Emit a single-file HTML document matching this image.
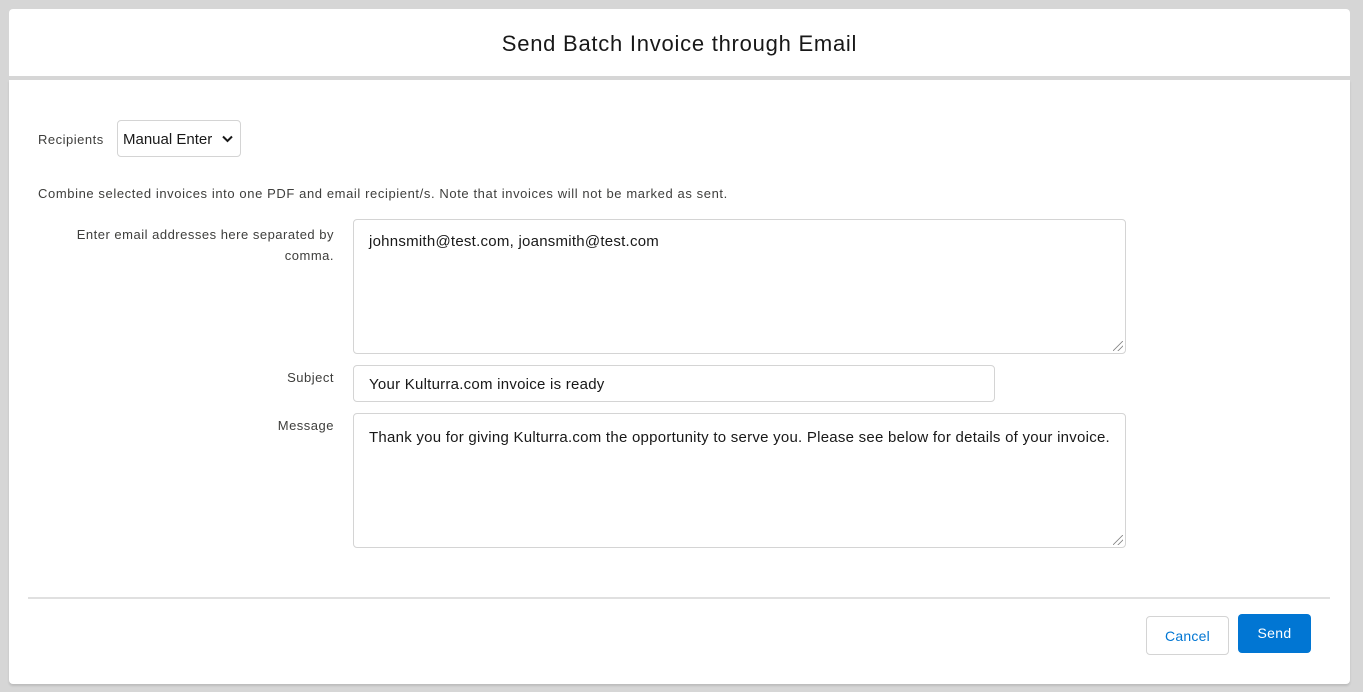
<!DOCTYPE html>
<html><head><style>
body{margin:0;width:1363px;height:692px;background:#d6d6d6;font-family:"Liberation Sans",sans-serif;position:relative;overflow:hidden}
.a{position:absolute}
.card{background:#fff;border-radius:4px}
.lbl{color:#3e3e3c;font-size:13px;letter-spacing:0.5px}
.box{border:1px solid #d4d4d4;border-radius:4px;background:#fff;box-sizing:border-box;font-size:15px;color:#181818;letter-spacing:0.25px}
.grip{position:absolute;right:2px;bottom:2px;width:10px;height:10px;background:linear-gradient(135deg,transparent 45%,#888 46%,#888 52%,transparent 53%,transparent 70%,#888 71%,#888 77%,transparent 78%)}
</style></head><body>
<div class="a card" style="left:9px;top:9px;width:1341px;height:67px;border-radius:4px 4px 0 0"></div>
<div class="a" style="left:9px;top:31px;width:1341px;text-align:center;font-size:22px;color:#181818;letter-spacing:0.75px">Send Batch Invoice through Email</div>
<div class="a card" style="left:9px;top:80px;width:1341px;height:604px;border-radius:0 0 4px 4px;box-shadow:0 2px 2px rgba(0,0,0,.12)"></div>
<div class="a lbl" style="left:38px;top:132px">Recipients</div>
<div class="a box" style="left:117px;top:120px;width:124px;height:37px;padding:10px 0 0 5px;letter-spacing:0">Manual Enter
<svg class="a" style="left:104px;top:14px" width="11" height="8" viewBox="0 0 11 8"><path d="M1 1.5l4.5 4.5 4.5-4.5" fill="none" stroke="#181818" stroke-width="2"/></svg></div>
<div class="a lbl" style="left:38px;top:186px;letter-spacing:0.6px">Combine selected invoices into one PDF and email recipient/s. Note that invoices will not be marked as sent.</div>
<div class="a lbl" style="left:20px;top:224px;width:314px;text-align:right;line-height:21px">Enter email addresses here separated by<br>comma.</div>
<div class="a box" style="left:353px;top:219px;width:773px;height:135px;padding:13px 15px">johnsmith@test.com, joansmith@test.com<div class="grip"></div></div>
<div class="a lbl" style="left:40px;top:370px;width:294px;text-align:right">Subject</div>
<div class="a box" style="left:353px;top:365px;width:642px;height:37px;padding:10px 15px">Your Kulturra.com invoice is ready</div>
<div class="a lbl" style="left:40px;top:418px;width:294px;text-align:right">Message</div>
<div class="a box" style="left:353px;top:413px;width:773px;height:135px;padding:15px 15px">Thank you for giving Kulturra.com the opportunity to serve you. Please see below for details of your invoice.<div class="grip"></div></div>
<div class="a" style="left:28px;top:597px;width:1302px;height:2px;background:#e0e0e0"></div>
<div class="a box" style="left:1146px;top:616px;width:83px;height:39px;text-align:center;line-height:39px;color:#0176d3;font-size:14px">Cancel</div>
<div class="a" style="left:1238px;top:614px;width:73px;height:39px;background:#0176d3;border-radius:4px;color:#fff;text-align:center;line-height:39px;font-size:14px;letter-spacing:0.3px">Send</div>
</body></html>
